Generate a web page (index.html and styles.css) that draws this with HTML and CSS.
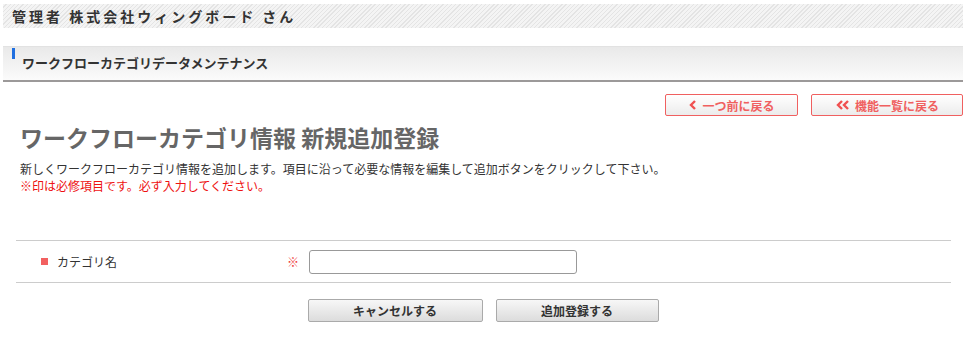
FILE: index.html
```html
<!DOCTYPE html>
<html lang="ja">
<head>
  <meta charset="UTF-8">
  <title>ワークフローカテゴリデータメンテナンス</title>
  <link rel="stylesheet" href="styles.css">
</head>
<body>
  <div class="page">
    <div class="user-bar">管理者 株式会社ウィングボード さん</div>

    <div class="section-bar">
      <span class="section-mark"></span>
      <h2>ワークフローカテゴリデータメンテナンス</h2>
    </div>

    <div class="nav-buttons">
      <button class="back-button back-one">
        <svg width="10" height="10" viewBox="0 0 10 10"><path d="M7 1 L3 5 L7 9" fill="none" stroke="#f05050" stroke-width="2.4"/></svg>
        一つ前に戻る
      </button>
      <button class="back-button back-menu">
        <svg width="16" height="10" viewBox="0 0 16 10"><path d="M7 1 L3 5 L7 9 M13 1 L9 5 L13 9" fill="none" stroke="#f05050" stroke-width="2.4"/></svg>
        機能一覧に戻る
      </button>
    </div>

    <h1>ワークフローカテゴリ情報 新規追加登録</h1>
    <p class="lead">新しくワークフローカテゴリ情報を追加します。項目に沿って必要な情報を編集して追加ボタンをクリックして下さい。</p>
    <p class="note">※印は必修項目です。必ず入力してください。</p>

    <div class="form-table">
      <div class="form-row">
        <div class="form-label"><span class="bullet"></span>カテゴリ名</div>
        <div class="required">※</div>
        <input type="text" class="form-input">
      </div>
    </div>

    <div class="form-buttons">
      <button class="gray-button cancel">キャンセルする</button>
      <button class="gray-button submit">追加登録する</button>
    </div>
  </div>
</body>
</html>
```

FILE: styles.css
```css
* {
  margin: 0;
  padding: 0;
  box-sizing: border-box;
}

body {
  font-family: "Noto Sans CJK JP", "Noto Sans", sans-serif;
  background: white;
  color: #333;
  font-size: 12px;
}

.page {
  width: 960px;
  margin-left: 3px;
  padding-top: 4px;
}

.user-bar {
  height: 24px;
  line-height: 24px;
  padding-left: 9px;
  font-size: 14px;
  font-weight: bold;
  letter-spacing: 3px;
  color: #333;
  background: repeating-linear-gradient(135deg, #f4f4f4 0, #f4f4f4 2px, #e4e4e4 2px, #e4e4e4 3px);
}

.section-bar {
  margin-top: 18px;
  height: 36px;
  display: flex;
  border-top: 1px solid #e2e2e2;
  border-bottom: 2px solid #9c9999;
  background: linear-gradient(#e9e9e9, #fbfbfb);
}

.section-mark {
  width: 3px;
  height: 11px;
  margin: 1px 0 0 9px;
  background: #1f6fe0;
}

.section-bar h2 {
  margin: 7px 0 0 7px;
  font-size: 13px;
  font-weight: bold;
  color: #333;
  line-height: 18px;
}

.nav-buttons {
  display: flex;
  justify-content: flex-end;
  gap: 13px;
  margin-top: 12px;
}

.back-button {
  height: 22px;
  display: flex;
  align-items: center;
  justify-content: center;
  gap: 4px;
  border: 1px solid #f06060;
  border-radius: 2px;
  background: linear-gradient(#ffffff, #ececec);
  color: #f06060;
  font-family: inherit;
  font-size: 12px;
  font-weight: bold;
}

.back-one {
  width: 133px;
}

.back-menu {
  width: 152px;
}

h1 {
  margin: 6px 0 0 17px;
  font-size: 23px;
  line-height: 30px;
  font-weight: bold;
  color: #666;
}

.lead {
  margin: 8px 0 0 17px;
  line-height: 17px;
}

.note {
  margin-left: 17px;
  line-height: 17px;
  color: #ee1111;
}

.form-table {
  width: 935px;
  margin: 46px 0 0 13px;
  border-top: 1px solid #cccccc;
  border-bottom: 1px solid #cccccc;
}

.form-row {
  height: 41px;
  display: flex;
  align-items: center;
}

.form-label {
  width: 271px;
  padding-left: 25px;
  display: flex;
  align-items: center;
  gap: 9px;
  color: #333;
}

.bullet {
  width: 7px;
  height: 7px;
  background: #f26060;
}

.required {
  width: 22px;
  color: #f04040;
  font-size: 12px;
}

.form-input {
  width: 268px;
  height: 24px;
  border: 1px solid #999;
  border-radius: 3px;
}

.form-buttons {
  display: flex;
  justify-content: center;
  gap: 13px;
  margin-top: 16px;
}

.gray-button {
  height: 23px;
  border: 1px solid #aaaaaa;
  border-radius: 2px;
  background: linear-gradient(#f7f7f7, #dcdcdc);
  font-family: inherit;
  font-size: 12px;
  font-weight: bold;
  color: #333;
}

.cancel {
  width: 175px;
}

.submit {
  width: 163px;
}
```
